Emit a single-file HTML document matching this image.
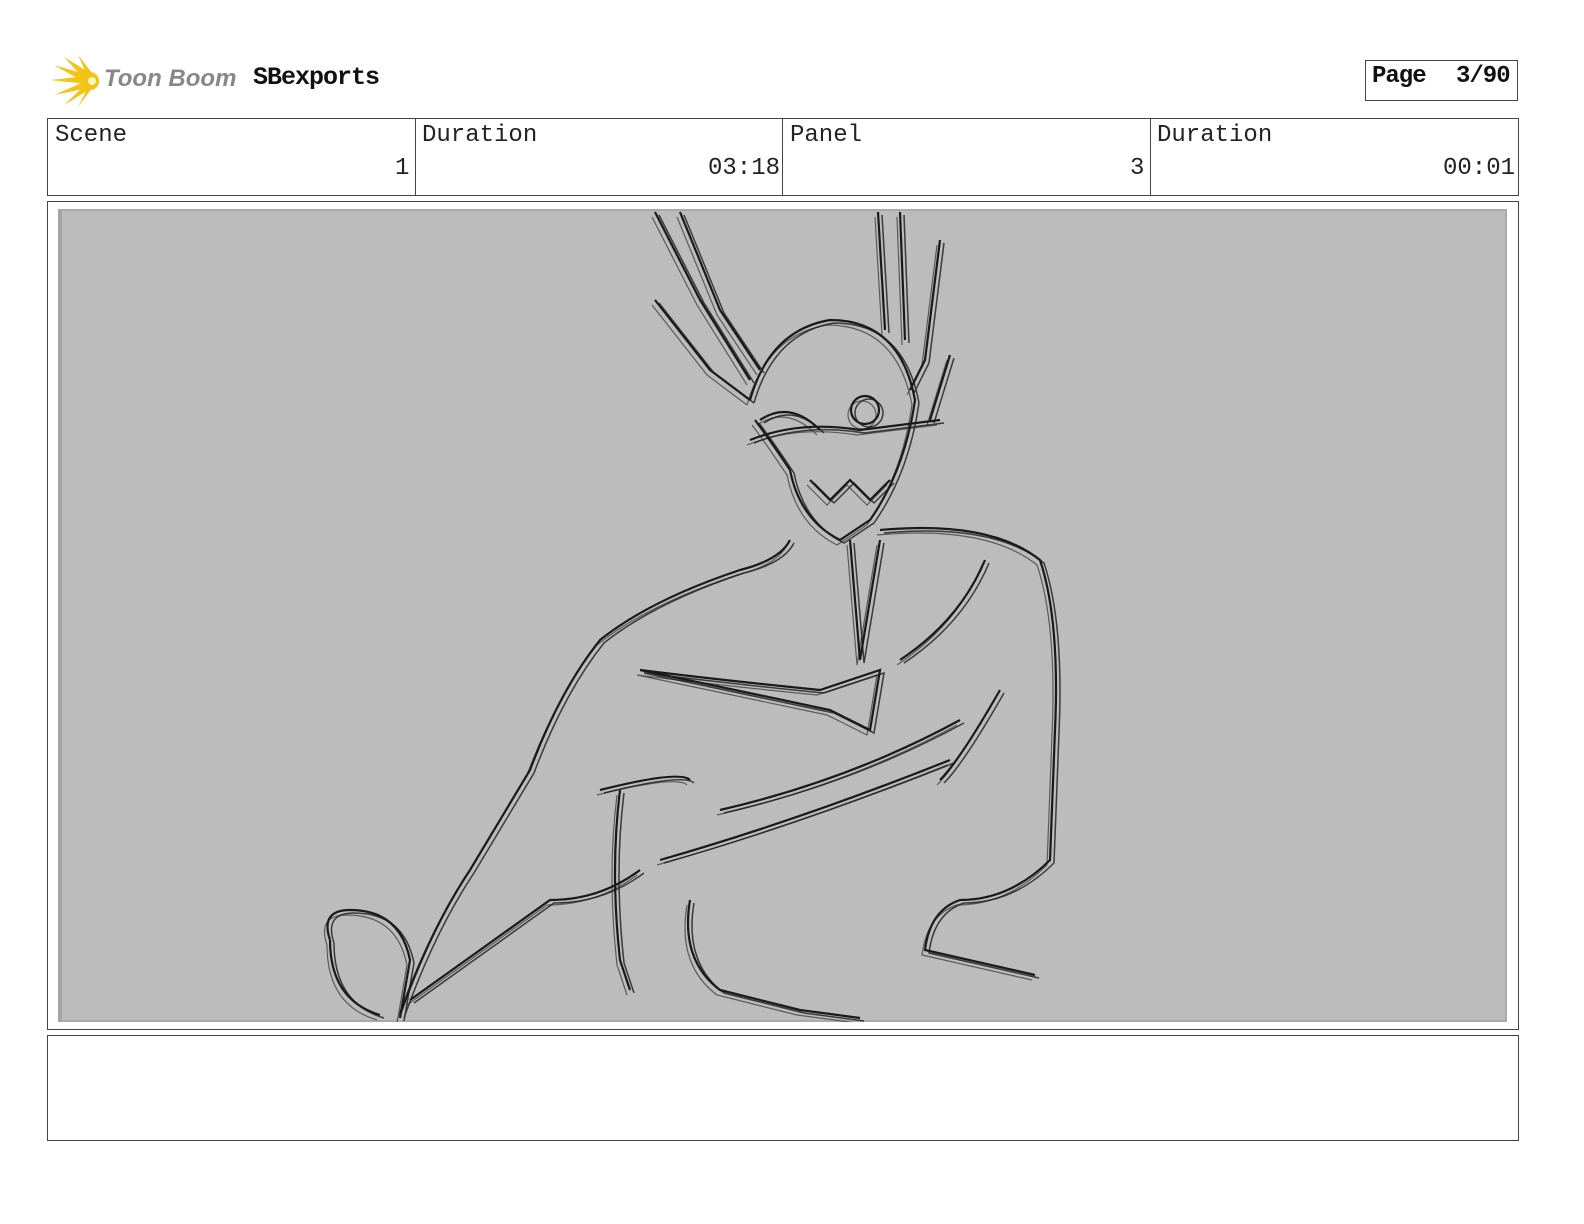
<!DOCTYPE html>
<html><head><meta charset="utf-8"><style>
body{margin:0;width:1584px;height:1224px;background:#fff;position:relative;font-family:"Liberation Mono",monospace;overflow:hidden}
.b{position:absolute;border:1px solid #444;box-sizing:border-box}
.lbl{position:absolute;font-size:24px;color:#222}
</style></head><body>
<svg style="position:absolute;left:50px;top:55px" width="55" height="52" viewBox="0 0 55 52">
<g fill="#f3c316">
<path d="M0 25 L38 21 L38 29Z"/><path d="M4 10 L38 20 L34 27Z"/><path d="M4 40 L36 26 L38 33Z"/>
<path d="M14 2 L40 18 L34 24Z"/><path d="M14 50 L36 29 L40 34Z"/><path d="M28 0 L42 18 L37 20Z"/><path d="M28 52 L38 32 L42 33Z"/>
<circle cx="40" cy="26" r="9"/></g><circle cx="42" cy="26" r="4" fill="#fff6c0"/>
</svg>
<div style="position:absolute;left:104px;top:65px;font-family:'Liberation Sans',sans-serif;font-style:italic;font-weight:bold;font-size:24px;color:#888">Toon Boom</div>
<div style="position:absolute;left:253px;top:63px;font-weight:bold;font-size:25px;color:#111;letter-spacing:-1px">SBexports</div>
<div class="b" style="left:1365px;top:60px;width:153px;height:41px"></div>
<div style="position:absolute;left:1372px;top:63px;font-weight:bold;font-size:24px;color:#111;letter-spacing:-1px">Page</div>
<div style="position:absolute;left:1456px;top:63px;font-weight:bold;font-size:24px;color:#111;letter-spacing:-1px">3/90</div>

<div class="b" style="left:47px;top:118px;width:1472px;height:78px"></div>
<div class="b" style="left:415px;top:118px;width:1px;height:78px;border:none;background:#444"></div>
<div class="b" style="left:782px;top:118px;width:1px;height:78px;border:none;background:#444"></div>
<div class="b" style="left:1150px;top:118px;width:1px;height:78px;border:none;background:#444"></div>
<div class="lbl" style="left:55px;top:122px">Scene</div>
<div class="lbl" style="left:422px;top:122px">Duration</div>
<div class="lbl" style="left:790px;top:122px">Panel</div>
<div class="lbl" style="left:1157px;top:122px">Duration</div>
<div class="lbl" style="left:395px;top:155px">1</div>
<div class="lbl" style="left:708px;top:155px">03:18</div>
<div class="lbl" style="left:1130px;top:155px">3</div>
<div class="lbl" style="left:1443px;top:155px">00:01</div>

<div class="b" style="left:47px;top:201px;width:1472px;height:829px"></div>
<div style="position:absolute;left:58px;top:209px;width:1449px;height:813px;background:#bcbcbc;box-shadow:inset 4px 0 0 #a4a4a4, inset 0 2px 0 #aaa, inset -2px 0 0 #aaa, inset 0 -2px 0 #aaa"></div>
<svg style="position:absolute;left:58px;top:209px" width="1449" height="813" viewBox="58 209 1449 813" fill="none" stroke="#1a1a1a" stroke-width="2.2">
<defs><g id="s">
<path d="M655 212 L700 300 L750 380 M680 212 L720 310 L760 370 M655 300 L710 370 L750 400"/>
<path d="M878 212 L885 330 M900 212 L905 340 M940 240 L925 360 L910 390 M950 355 L930 420"/>
<path d="M750 400 Q770 330 830 320 Q900 320 915 400 Q905 470 870 520 L840 540 Q800 520 790 470 Q770 440 755 420"/>
<path d="M750 440 Q800 420 860 430 L940 420 M760 420 Q790 400 820 430"/>
<circle cx="865" cy="410" r="14"/>
<path d="M810 480 L830 500 L850 480 L870 500 L890 480"/>
<path d="M790 540 Q780 560 740 570 Q650 600 600 640 Q560 690 530 770 L470 870 Q430 930 400 1015"/>
<path d="M880 530 Q990 520 1040 560 Q1060 620 1055 730 L1050 860 Q1010 900 960 900 Q930 910 925 950 L1035 975"/>
<path d="M330 940 Q320 910 350 910 Q400 910 410 960 L400 1018 M330 940 Q330 1000 380 1015"/>
<path d="M600 790 Q680 770 690 780 M620 790 Q610 870 620 960 L630 990 M720 810 Q850 780 960 720 M660 860 Q800 820 950 760"/>
<path d="M640 870 Q600 900 550 900 L480 950 L410 1000 M690 900 Q680 960 720 990 L800 1010 L860 1018"/>
<path d="M640 670 Q720 680 820 690 L880 670 L870 730 L830 710 Z M850 540 L860 660 L880 540"/>
<path d="M985 560 Q960 620 900 660 M1000 690 Q960 760 940 780"/>
</g></defs>
<use href="#s"/>
<use href="#s" transform="translate(4,3)" stroke-width="1.5" opacity="0.8"/>
<use href="#s" transform="translate(-3,5)" stroke-width="1.2" opacity="0.6"/>
</svg>

<div class="b" style="left:47px;top:1035px;width:1472px;height:106px"></div>
</body></html>
